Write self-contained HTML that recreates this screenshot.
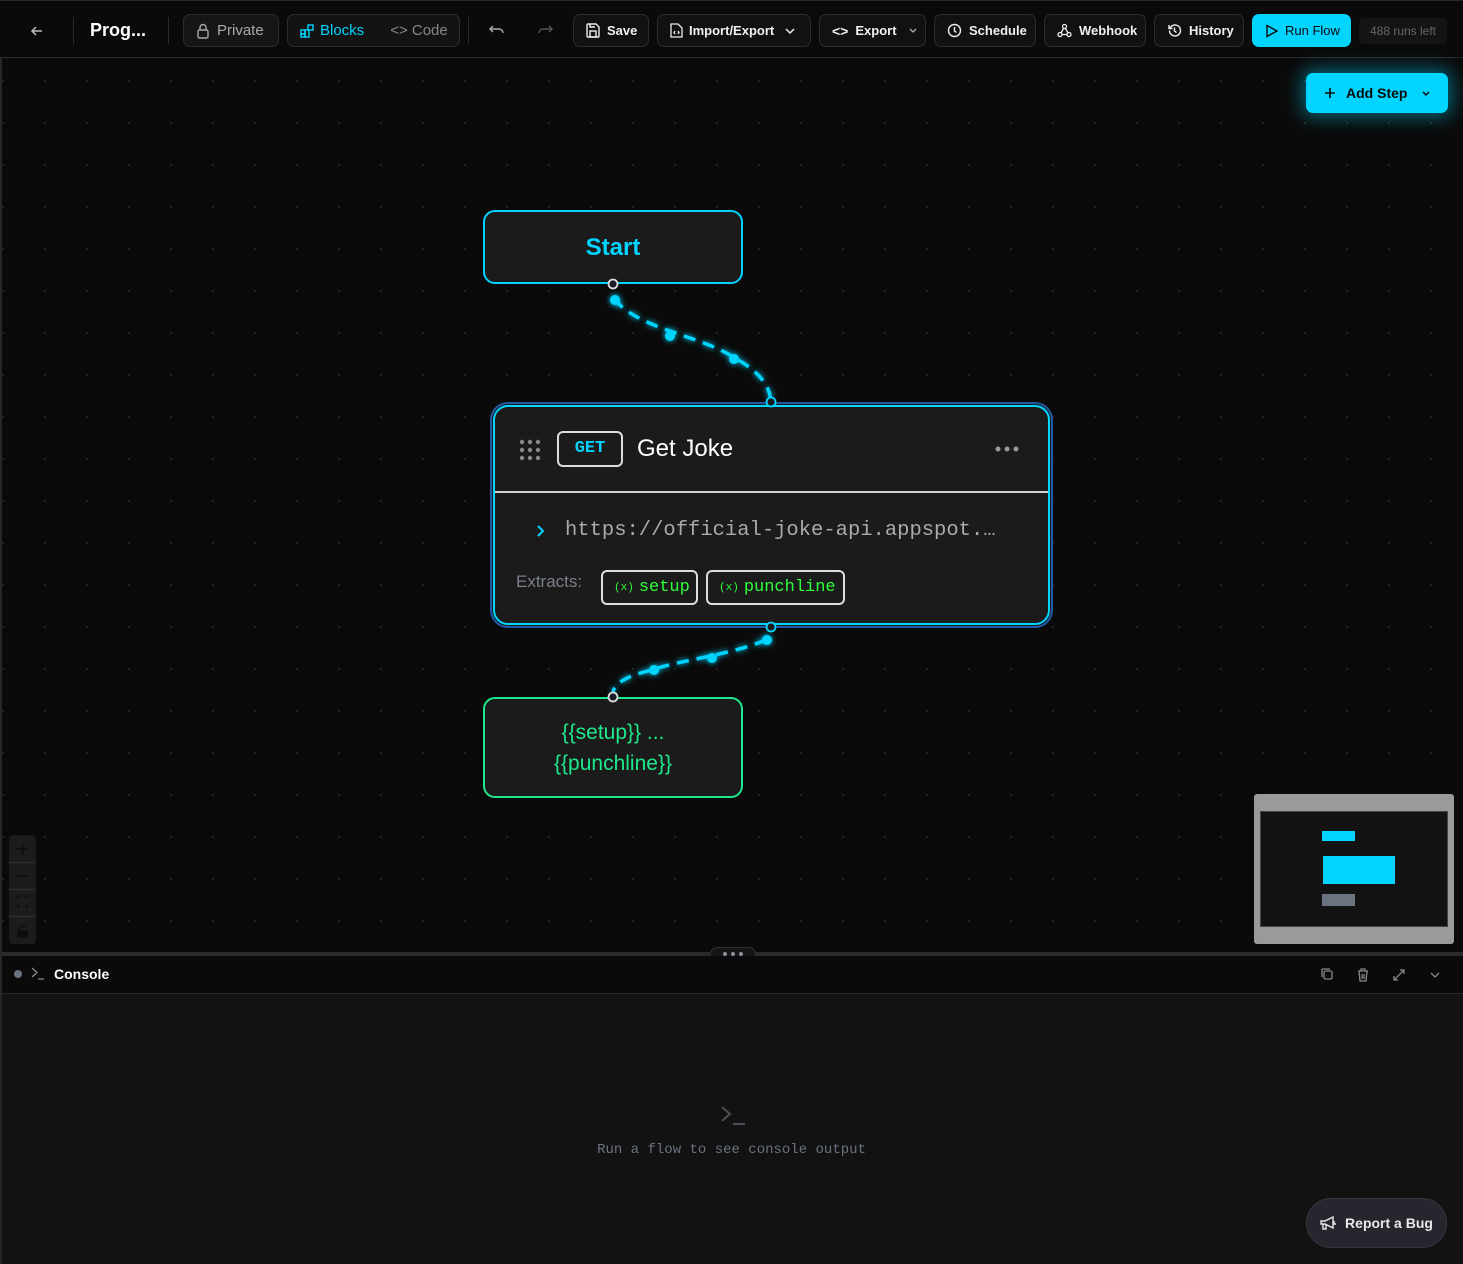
<!DOCTYPE html>
<html><head><meta charset="utf-8">
<style>
*{box-sizing:border-box;margin:0;padding:0}
body{width:1463px;height:1264px;background:#0a0a0a;font-family:"Liberation Sans",sans-serif;color:#e5e5e5;position:relative;overflow:hidden}
.hdr{position:absolute;left:0;top:0;width:1463px;height:58px;background:#0a0a0a;border-bottom:1px solid #2a2a2a;border-top:1px solid #2a2a2a}
.btn{position:absolute;top:13px;height:33px;border:1px solid #2c2c2c;border-radius:7px;background:#111;display:flex;align-items:center;gap:7px;padding:0 12px;font-size:13px;font-weight:bold;color:#f0f0f0;white-space:nowrap}
.btn svg{flex:none}
.sep{position:absolute;top:16px;width:1px;height:27px;background:#2a2a2a}
.canvas{position:absolute;left:0;top:58px;width:1463px;height:894px;
background-image:radial-gradient(circle,#262626 1px,transparent 1.3px);background-size:42px 42px;background-position:-18px 2px}
.node{position:absolute;background:#1b1b1b;border-radius:12px}
.mono{font-family:"Liberation Mono","DejaVu Sans Mono",monospace}
.pill{position:absolute;top:166px;height:35px;border:2px solid #ddd;border-radius:6px;color:#2dff3a;font-size:17px;display:flex;align-items:center;gap:5px;padding-left:11px;white-space:nowrap}
</style></head><body>
<div class="hdr">
  <svg style="position:absolute;left:29px;top:22px" width="16" height="16" viewBox="0 0 16 16" fill="none" stroke="#bbb" stroke-width="1.5"><path d="M13 8H3M7 4L3 8l4 4"/></svg>
  <div class="sep" style="left:73px"></div>
  <div style="position:absolute;left:90px;top:19px;font-size:18px;font-weight:bold;color:#fff">Prog...</div>
  <div class="sep" style="left:168px"></div>
  <div class="btn" style="left:183px;width:96px;font-weight:normal;color:#aaa;font-size:15px;background:#161616"><svg width="14" height="16" viewBox="0 0 14 16" fill="none" stroke="#aaa" stroke-width="1.4"><rect x="2" y="7" width="10" height="8" rx="1.5"/><path d="M4 7V4.5a3 3 0 016 0V7"/></svg>Private</div>
  <div class="btn" style="left:287px;width:173px;font-weight:normal;font-size:15px;background:#131313;padding:0 12px;gap:6px"><svg width="14" height="14" viewBox="0 0 14 14" fill="none" stroke="#00d4ff" stroke-width="1.4"><rect x="1" y="6" width="4" height="4"/><rect x="5" y="6" width="4" height="7"/><rect x="1" y="10" width="4" height="3"/><rect x="8" y="1" width="5" height="5"/></svg><span style="color:#00d4ff">Blocks</span><span style="margin-left:20px;color:#888">&lt;&gt; Code</span></div>
  <div class="sep" style="left:468px"></div>
  <svg style="position:absolute;left:489px;top:22px" width="16" height="14" viewBox="0 0 16 14" fill="none" stroke="#aaa" stroke-width="1.4"><path d="M4 3L1 6l3 3M1 6h9a4 4 0 014 4"/></svg>
  <svg style="position:absolute;left:537px;top:22px" width="16" height="14" viewBox="0 0 16 14" fill="none" stroke="#555" stroke-width="1.4"><path d="M12 3l3 3-3 3M15 6H6a4 4 0 00-4 4"/></svg>
  <div class="btn" style="left:573px;width:76px"><svg width="14" height="15" viewBox="0 0 14 15" fill="none" stroke="#eee" stroke-width="1.4"><path d="M1 2a1 1 0 011-1h8l3 3v9a1 1 0 01-1 1H2a1 1 0 01-1-1z"/><rect x="4" y="8" width="6" height="6"/><path d="M4 1v3h5"/></svg>Save</div>
  <div class="btn" style="left:657px;width:154px;gap:6px"><svg width="13" height="15" viewBox="0 0 13 15" fill="none" stroke="#eee" stroke-width="1.3"><path d="M1 1h7l4 4v9H1z"/><path d="M5 8l-1 1.5L5 11M8 8l1 1.5L8 11"/></svg>Import/Export<svg width="12" height="8" viewBox="0 0 12 8" fill="none" stroke="#eee" stroke-width="1.5" style="margin-left:4px"><path d="M2 2l4 4 4-4"/></svg></div>
  <div class="btn" style="left:819px;width:107px"><span style="font-size:14px">&lt;&gt;</span>Export<svg width="10" height="7" viewBox="0 0 10 7" fill="none" stroke="#aaa" stroke-width="1.3" style="margin-left:4px"><path d="M2 2l3 3 3-3"/></svg></div>
  <div class="btn" style="left:934px;width:102px"><svg width="15" height="15" viewBox="0 0 15 15" fill="none" stroke="#eee" stroke-width="1.4"><circle cx="7.5" cy="7.5" r="6"/><path d="M7.5 4v4l2 1.5"/></svg>Schedule</div>
  <div class="btn" style="left:1044px;width:102px"><svg width="15" height="15" viewBox="0 0 15 15" fill="none" stroke="#eee" stroke-width="1.3"><circle cx="7.5" cy="3.5" r="2"/><circle cx="3" cy="11.5" r="2"/><circle cx="12" cy="11.5" r="2"/><path d="M6.5 5.5L4 10M5 11.5h5M8.5 5.5L11 10"/></svg>Webhook</div>
  <div class="btn" style="left:1154px;width:90px"><svg width="15" height="15" viewBox="0 0 15 15" fill="none" stroke="#eee" stroke-width="1.4"><path d="M2.5 7.5a5.5 5.5 0 101.6-3.9L2 5.5M2 2v3.5h3.5"/><path d="M7.5 4.5v3.5l2 1.5"/></svg>History</div>
  <div class="btn" style="left:1252px;width:99px;background:#00d4ff;border-color:#00d4ff;color:#0a0a0a;font-weight:normal;padding:0 12px;gap:7px"><svg width="13" height="14" viewBox="0 0 13 14" fill="none" stroke="#0a0a0a" stroke-width="1.4"><path d="M2 1.5l10 5.5-10 5.5z"/></svg>Run Flow</div>
  <div style="position:absolute;left:1359px;top:17px;width:88px;height:26px;background:#141414;border-radius:5px;font-size:12px;color:#666;text-align:center;line-height:26px">488 runs left</div>
</div>

<div class="canvas"></div>

<div style="position:absolute;left:1306px;top:73px;width:142px;height:40px;background:#00d4ff;border-radius:7px;box-shadow:0 0 18px 4px rgba(0,212,255,.45);display:flex;align-items:center;padding-left:18px;gap:10px;font-size:14px;font-weight:bold;color:#0a0a0a">
<svg width="12" height="12" viewBox="0 0 12 12" stroke="#0a0a0a" stroke-width="1.6"><path d="M6 1v10M1 6h10"/></svg>Add Step<svg width="10" height="7" viewBox="0 0 10 7" fill="none" stroke="#0a0a0a" stroke-width="1.5" style="margin-left:4px"><path d="M2 2l3 3 3-3"/></svg></div>

<svg style="position:absolute;left:0;top:0" width="1463" height="952">
<defs><filter id="gl" x="-50%" y="-50%" width="200%" height="200%"><feGaussianBlur stdDeviation="3" result="b"/><feMerge><feMergeNode in="b"/><feMergeNode in="SourceGraphic"/></feMerge></filter></defs>
<g filter="url(#gl)" stroke="#00d4ff" stroke-width="3.5" fill="none" stroke-dasharray="12 8">
<path d="M614 299 C640 330, 700 335, 735 358 C765 375, 770 390, 771 402"/>
<path d="M766 640 C730 655, 680 660, 652 670 C630 675, 615 682, 613 692"/>
</g>
<g fill="#00d4ff" filter="url(#gl)">
<circle cx="615" cy="300" r="5"/><circle cx="670" cy="336" r="5"/><circle cx="734" cy="359" r="5"/>
<circle cx="767" cy="640" r="5"/><circle cx="712" cy="658" r="5"/><circle cx="654" cy="670" r="5"/>
</g>
</svg>

<div class="node" style="left:483px;top:210px;width:260px;height:74px;border:2px solid #00d4ff;text-align:center;line-height:72px;font-size:24px;font-weight:bold;color:#00d4ff">Start</div>

<div class="node" style="left:490px;top:402px;width:563px;height:226px;border:2px solid #1e5aa8;border-radius:18px;padding:0;background:#1b1b1b">
 <div style="position:absolute;inset:1px;border:2px solid #00d4ff;border-radius:15px"></div>
 <div style="position:absolute;left:3px;right:3px;top:87px;height:2px;background:#d0d0d0"></div>
 <svg style="position:absolute;left:27px;top:35px" width="22" height="22"><g fill="#8a8a8a"><circle cx="3" cy="3" r="2.2"/><circle cx="11" cy="3" r="2.2"/><circle cx="19" cy="3" r="2.2"/><circle cx="3" cy="11" r="2.2"/><circle cx="11" cy="11" r="2.2"/><circle cx="19" cy="11" r="2.2"/><circle cx="3" cy="19" r="2.2"/><circle cx="11" cy="19" r="2.2"/><circle cx="19" cy="19" r="2.2"/></g></svg>
 <div class="mono" style="position:absolute;left:65px;top:27px;width:66px;height:36px;border:2px solid #ddd;border-radius:6px;text-align:center;line-height:32px;color:#00d4ff;font-weight:bold;font-size:17px">GET</div>
 <div style="position:absolute;left:145px;top:31px;font-size:24px;color:#fff">Get Joke</div>
 <svg style="position:absolute;left:503px;top:42px" width="24" height="6"><g fill="#999"><circle cx="3" cy="3" r="2.5"/><circle cx="12" cy="3" r="2.5"/><circle cx="21" cy="3" r="2.5"/></g></svg>
 <svg style="position:absolute;left:44px;top:120px" width="10" height="14" fill="none" stroke="#00d4ff" stroke-width="2"><path d="M2 2l5 5-5 5"/></svg>
 <div class="mono" style="position:absolute;left:73px;top:115px;font-size:20.5px;color:#aaa;white-space:nowrap">https://official-joke-api.appspot.…</div>
 <div style="position:absolute;left:24px;top:168px;font-size:17px;color:#7a7f8a">Extracts:</div>
 <div class="pill mono" style="left:109px;width:97px"><span style="font-size:11px">(x)</span>setup</div>
 <div class="pill mono" style="left:214px;width:139px"><span style="font-size:11px">(x)</span>punchline</div>
</div>

<div class="node" style="left:483px;top:697px;width:260px;height:101px;border:2px solid #1de98b;text-align:center;padding-top:18px;font-size:21px;line-height:31px;color:#1de98b">{{setup}} ...<br>{{punchline}}</div>

<svg style="position:absolute;left:0;top:0" width="1463" height="952">
<circle cx="613" cy="284" r="4.5" fill="#1b1b2a" stroke="#ddd" stroke-width="1.8"/>
<circle cx="771" cy="402" r="4.5" fill="#1b1b1b" stroke="#00d4ff" stroke-width="1.8"/>
<circle cx="771" cy="627" r="4.5" fill="#1b1b1b" stroke="#00d4ff" stroke-width="1.8"/>
<circle cx="613" cy="697" r="4.5" fill="#1b1b2a" stroke="#ddd" stroke-width="1.8"/>
</svg>

<div style="position:absolute;left:9px;top:835px;width:27px;height:109px;background:#1c1c1c;border-radius:4px">
 <svg width="27" height="109" fill="none" stroke="#0c0c0c" stroke-width="1.5">
 <path d="M0 27.5h27M0 54.5h27M0 81.5h27" stroke="#2c2c2c"/>
 <path d="M13.5 8v12M7.5 14h12M7.5 41h12"/>
 <path d="M9 63v-2h2M16 61h2v2M18 70v2h-2M11 72h-2v-2"/>
 <rect x="9" y="96" width="9" height="6" fill="#0c0c0c"/><path d="M10.5 96v-2.5a3 3 0 015.5-1"/>
 </svg>
</div>

<div style="position:absolute;left:1254px;top:794px;width:200px;height:150px;background:#9a9a9a;border-radius:3px">
 <div style="position:absolute;left:6px;top:17px;width:188px;height:116px;background:#121212;border:1px solid #444"></div>
 <div style="position:absolute;left:68px;top:37px;width:33px;height:10px;background:#00d4ff"></div>
 <div style="position:absolute;left:69px;top:62px;width:72px;height:28px;background:#00d4ff"></div>
 <div style="position:absolute;left:68px;top:100px;width:33px;height:12px;background:#6b7280"></div>
</div>

<div style="position:absolute;left:0;top:952px;width:1463px;height:4px;background:#2a2a2a"></div>
<div style="position:absolute;left:710px;top:947px;width:46px;height:14px;background:#151515;border:1px solid #2f2f2f;border-radius:7px"><svg width="46" height="14" style="position:absolute;left:-1px;top:-1px"><g fill="#8a8f9a"><circle cx="15" cy="7" r="2"/><circle cx="23" cy="7" r="2"/><circle cx="31" cy="7" r="2"/></g></svg></div>
<div style="position:absolute;left:0;top:956px;width:1463px;height:38px;background:#0a0a0a;border-bottom:1px solid #2a2a2a">
 <div style="position:absolute;left:14px;top:14px;width:8px;height:8px;border-radius:50%;background:#6b7280"></div>
 <svg style="position:absolute;left:31px;top:11px" width="14" height="13" fill="none" stroke="#888" stroke-width="1.3"><path d="M1 1l5 4.5L1 10M7 12h6"/></svg>
 <div style="position:absolute;left:54px;top:10px;font-size:14px;font-weight:bold;color:#fff">Console</div>
 <svg style="position:absolute;left:1320px;top:11px" width="126" height="16" fill="none" stroke="#888" stroke-width="1.3">
  <rect x="4" y="4" width="8" height="8" rx="1.5"/><path d="M2 10V3a1 1 0 011-1h7"/>
  <path d="M38 4h10M41 4V2h4v2M39 4l1 10h6l1-10M42 7v5M44 7v5"/>
  <path d="M74 13l10-10M80 3h4v4M78 13h-4v-4"/>
  <path d="M111 6l4 4 4-4"/>
 </svg>
</div>
<div style="position:absolute;left:0;top:994px;width:1463px;height:270px;background:#121212"></div>
<div style="position:absolute;left:0;top:58px;width:2px;height:1206px;background:#262626"></div>
<svg style="position:absolute;left:720px;top:1104px" width="26" height="22" fill="none" stroke="#4b4f57" stroke-width="2"><path d="M2 3l8 7-8 7M13 20h12"/></svg>
<div class="mono" style="position:absolute;left:0;width:1463px;top:1142px;text-align:center;font-size:14px;color:#6b7280">Run a flow to see console output</div>

<div style="position:absolute;left:1306px;top:1198px;width:141px;height:50px;border-radius:25px;background:#29252f;border:1px solid #3a3640;display:flex;align-items:center;justify-content:center;gap:8px;font-size:14px;font-weight:bold;color:#e8e8e8">
<svg width="17" height="15" viewBox="0 0 17 15" fill="none" stroke="#e8e8e8" stroke-width="1.4"><path d="M1 5h4l8-4v11l-8-4H1zM3 8v5h3V8M14 5v3h2"/></svg>Report a Bug</div>
</body></html>
